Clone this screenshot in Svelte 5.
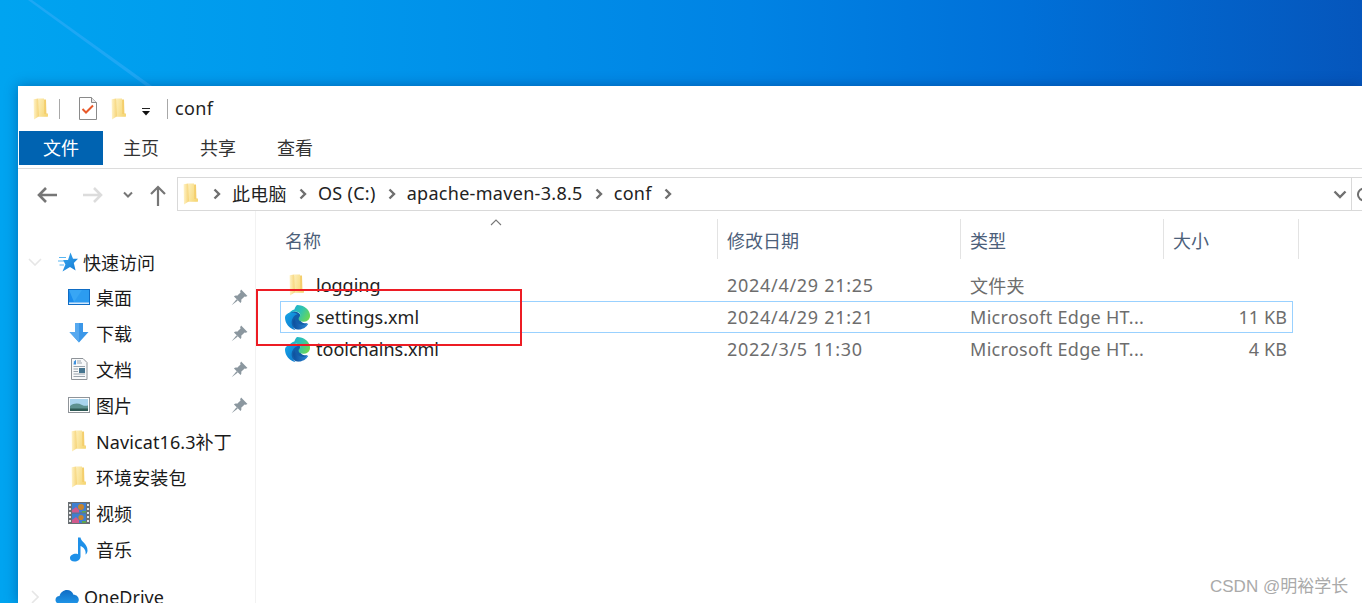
<script>
  const quick = [
    { label: '桌面', icon: 'desktop', pin: true },
    { label: '下载', icon: 'download', pin: true },
    { label: '文档', icon: 'docs', pin: true },
    { label: '图片', icon: 'pics', pin: true },
    { label: 'Navicat16.3补丁', icon: 'folder', pin: false },
    { label: '环境安装包', icon: 'folder', pin: false },
    { label: '视频', icon: 'video', pin: false },
    { label: '音乐', icon: 'music', pin: false }
  ];
  const files = [
    { name: 'logging', date: '2024/4/29 21:25', type: '文件夹', size: '', icon: 'folder' },
    { name: 'settings.xml', date: '2024/4/29 21:21', type: 'Microsoft Edge HT...', size: '11 KB', icon: 'edge', selected: true },
    { name: 'toolchains.xml', date: '2022/3/5 11:30', type: 'Microsoft Edge HT...', size: '4 KB', icon: 'edge' }
  ];
  const crumbs = ['此电脑', 'OS (C:)', 'apache-maven-3.8.5', 'conf'];
</script>

{#snippet folder()}
  <svg class="i-folder" viewBox="0 0 15 22">
    <path d="M4 1.5H13L13.4 15.5H14.8V18.5H4Z" fill="url(#fback)" />
    <path d="M0.6 1.2L5.2 0.6L6 18.2L1 21.4Z" fill="url(#ffront)" />
    <path d="M5.2 0.6H11V16H14.8V18.5H6Z" fill="url(#fmid)" />
  </svg>
{/snippet}

{#snippet edge()}
  <svg class="i-edge" viewBox="0 0 24 24">
    <path d="M3 10C5 5 11 5 14 8.5C16 11 15 14 15 15C17 18 20 17.5 21.5 17.5C19 21.5 15 23.5 11.5 23.5C6 22 2 16 3 10Z" fill="#125ea9" />
    <path d="M21.86 17.86q.14 0 .25.12.1.13.1.25t-.11.33l-.32.46-.43.53-.44.5q-.21.25-.38.42l-.22.23q-.58.53-1.34 1.04-.76.51-1.6.91-.86.4-1.74.64t-1.67.24q-.9 0-1.69-.28-.8-.28-1.48-.78-.68-.5-1.22-1.17-.53-.66-.92-1.44-.38-.77-.58-1.6-.2-.83-.2-1.67 0-1 .32-1.96.33-.97.87-1.8.14.95.55 1.77.41.82 1.02 1.5.6.68 1.38 1.21.78.54 1.64.9.86.36 1.77.56.92.2 1.8.2 1.12 0 2.18-.24 1.06-.23 2.06-.72l.2-.1.2-.05z" fill="url(#edgeA)" />
    <path d="M6.36 16.59q0 1.1.27 2.15.27 1.06.78 2.03.51.96 1.24 1.77.74.82 1.66 1.4-1.47-.2-2.8-.74-1.33-.55-2.48-1.37-1.15-.83-2.08-1.9-.92-1.07-1.58-2.33T.36 14.94Q0 13.54 0 12.06q0-.81.32-1.49.31-.68.83-1.23.53-.55 1.2-.96.66-.4 1.35-.66.74-.27 1.5-.39.78-.12 1.55-.12.7 0 1.42.1.72.12 1.4.35.68.23 1.32.57.63.35 1.16.83-.35 0-.7.07-.33.07-.65.23v-.02q-.63.28-1.2.74-.57.46-1.05 1.04-.48.58-.87 1.26-.38.67-.65 1.39-.27.71-.42 1.44-.15.72-.15 1.38z" fill="url(#edgeB)" />
    <path d="M11.96.06q1.7 0 3.33.39 1.63.38 3.07 1.15 1.43.77 2.62 1.93 1.18 1.16 1.98 2.7.49.94.76 1.96.28 1 .28 2.08 0 .89-.23 1.7-.24.8-.69 1.48-.45.68-1.1 1.22-.64.53-1.45.88-.54.24-1.11.36-.58.13-1.16.13-.42 0-.97-.03-.54-.03-1.1-.12-.55-.09-1.09-.28-.54-.19-1-.51-.45-.32-.73-.79-.28-.46-.28-1.1 0-.56.2-1.02.2-.45.55-.83.37-.38.6-.72.22-.34.22-.78 0-.83-.48-1.5-.48-.67-1.23-1.12-.76-.46-1.67-.7-.9-.25-1.75-.25-1.68 0-3.1.56-1.42.57-2.44 1.53-1.02.96-1.61 2.23-.58 1.27-.6 2.66 0-1.55.53-2.97.54-1.42 1.5-2.58.96-1.16 2.29-2.02 1.33-.85 2.9-1.3Q10.44.06 11.96.06z" fill="url(#edgeC)" />
  </svg>
{/snippet}

{#snippet navIcon(kind)}
  {#if kind === 'folder'}
    <span class="nav-folder">{@render folder()}</span>
  {:else if kind === 'desktop'}
    <svg class="i-box" viewBox="0 0 22 16">
      <rect x="0.5" y="0.5" width="21" height="15" fill="#1a8cec" stroke="#0f6cc4" />
      <path d="M1 1H21V13H6Z" fill="#38a6f4" />
      <path d="M14 1H21V13H6Z" fill="#2c9cf0" />
      <rect x="1" y="13.5" width="20" height="1.4" fill="#e8f4ff" />
    </svg>
  {:else if kind === 'download'}
    <svg class="i-box" viewBox="0 0 22 22">
      <path d="M7 1H15V10H20.5L11 20.5L1.5 10H7Z" fill="#3b97e8" />
      <path d="M7 1H11V20.5L1.5 10H7Z" fill="#57a9ef" />
    </svg>
  {:else if kind === 'docs'}
    <svg class="i-box" viewBox="0 0 22 22">
      <path d="M3.5 0.5H15L19 4.5V21.5H3.5Z" fill="#f8f9fa" stroke="#8e9398" />
      <path d="M6 3.5L8 1.8V6.5H5.5Z" fill="#3c8fdc" />
      <path d="M9 3H13M9 5H14M5.5 8.5H17M5.5 11H10M5.5 13.5H10M5.5 16H17M5.5 18.5H17" stroke="#9aa4ad" stroke-width="1" />
      <rect x="11" y="10" width="6" height="5" fill="#44748f" />
    </svg>
  {:else if kind === 'pics'}
    <svg class="i-box" viewBox="0 0 22 16">
      <rect x="0.5" y="0.5" width="21" height="15" fill="#fff" stroke="#8f9499" />
      <rect x="2" y="2" width="18" height="12" fill="#a9d4ee" />
      <path d="M2 9C6 6 10 6 14 8C16 9 18 9 20 8.5V14H2Z" fill="#5d9190" />
      <path d="M2 11.5H20V14H2Z" fill="#2f5a55" />
    </svg>
  {:else if kind === 'video'}
    <svg class="i-box" viewBox="0 0 22 22">
      <rect x="0" y="0" width="22" height="22" fill="#6a6f73" />
      <rect x="4" y="1" width="14" height="9.5" fill="#3f7fd0" />
      <rect x="4" y="11.5" width="14" height="9.5" fill="#3f7fd0" />
      <path d="M4 8L8 5L11 8V10.5H4Z" fill="#d05a8c" />
      <circle cx="13" cy="5" r="3" fill="#c8842c" />
      <path d="M4 18L8 15L11 18V21H4Z" fill="#d05a8c" />
      <circle cx="13" cy="15.5" r="2.6" fill="#c8842c" />
      <path d="M14 9H18V10.5H14ZM14 19H18V21H14Z" fill="#5ea64e" />
      <path d="M1 2H3V4H1ZM1 6H3V8H1ZM1 10H3V12H1ZM1 14H3V16H1ZM1 18H3V20H1ZM19 2H21V4H19ZM19 6H21V8H19ZM19 10H21V12H19ZM19 14H21V16H19ZM19 18H21V20H19Z" fill="#e4e6e8" />
    </svg>
  {:else if kind === 'music'}
    <svg class="i-music" viewBox="0 0 20 25">
      <path d="M9 0.5H11.5C12 5 18.5 6.5 18.5 13.5C18.5 15.5 17.5 17 16.5 17.5C17.5 13.5 14.5 10 11.5 9V19.5C11.5 22.5 8.5 24.5 5.5 24.5C2.5 24.5 1 23 1 21C1 18 5.5 16 9 17.2Z" fill="#1e90e8" />
    </svg>
  {/if}
{/snippet}

{#snippet pin()}
  <svg class="i-pin" viewBox="0 0 16 16">
    <path d="M9.5 0.5L15.5 6.5L13.8 7.4L12.8 7L9.6 10.2C10 11.4 9.8 12.4 9 13.2L2.8 7C3.6 6.2 4.6 6 5.8 6.4L9 3.2L8.6 2.2Z" fill="#8b979f" />
    <path d="M5.2 9.6L0.6 15.4L6.4 10.8Z" fill="#8b979f" />
  </svg>
{/snippet}

{#snippet chevron()}
  <svg class="i-crumb" viewBox="0 0 8 12"><path d="M1.5 1.5L6 6L1.5 10.5" fill="none" stroke="#6f6f6f" stroke-width="2.4" /></svg>
{/snippet}

<svg class="defs" aria-hidden="true">
  <defs>
    <linearGradient id="fback" x1="0" y1="0" x2="1" y2="0"><stop offset="0" stop-color="#fbe29a" /><stop offset="1" stop-color="#f2c95f" /></linearGradient>
    <linearGradient id="fmid" x1="0" y1="0" x2="1" y2="0.4"><stop offset="0" stop-color="#fdeeb8" /><stop offset="1" stop-color="#f6d878" /></linearGradient>
    <linearGradient id="ffront" x1="0" y1="0" x2="1" y2="0"><stop offset="0" stop-color="#fff3c8" /><stop offset="1" stop-color="#f5d273" /></linearGradient>
    <linearGradient id="edgeA" x1="0" y1="0" x2="1" y2="0"><stop offset="0" stop-color="#0d4f9c" /><stop offset="1" stop-color="#2a86d6" /></linearGradient>
    <linearGradient id="edgeB" x1="0" y1="0" x2="1" y2="1"><stop offset="0" stop-color="#15a3e8" /><stop offset="1" stop-color="#0d74c8" /></linearGradient>
    <linearGradient id="edgeC" x1="0" y1="0.3" x2="1" y2="0.7"><stop offset="0" stop-color="#16a6e0" /><stop offset="0.55" stop-color="#30c4b0" /><stop offset="1" stop-color="#6fd84f" /></linearGradient>
    <linearGradient id="star" x1="0" y1="0" x2="1" y2="1"><stop offset="0" stop-color="#36a8f0" /><stop offset="1" stop-color="#1479d2" /></linearGradient>
    <linearGradient id="cloud" x1="0" y1="0" x2="0" y2="1"><stop offset="0" stop-color="#0f6cc4" /><stop offset="1" stop-color="#1f96e8" /></linearGradient>
  </defs>
</svg>

<div class="desktop">
  <svg class="beam" viewBox="0 0 1362 86" preserveAspectRatio="none" aria-hidden="true">
    <path d="M32 0L152 86H146L28 0Z" fill="#27aaf5" opacity="0.75" />
  </svg>

  <div class="window">
    <header class="titlebar">
      <span class="t-folder">{@render folder()}</span>
      <span class="t-sep first"></span>
      <svg class="i-check" viewBox="0 0 18 23">
        <path d="M0.5 0.5H12.5L17.5 5.5V22.5H0.5Z" fill="#fff" stroke="#8a8a8a" />
        <path d="M12.5 0.5V5.5H17.5" fill="#e8e8e8" stroke="#8a8a8a" />
        <path d="M3.5 12L7 15.5L14 8.5" fill="none" stroke="#e8592a" stroke-width="2" />
      </svg>
      <span class="t-folder second">{@render folder()}</span>
      <svg class="i-drop" viewBox="0 0 10 10"><path d="M1 1.5H9" stroke="#222" /><path d="M1 4H9L5 8.5Z" fill="#111" /></svg>
      <span class="t-sep last"></span>
      <span class="t-title">conf</span>
    </header>

    <nav class="tabs">
      <span class="tab active">文件</span>
      <span class="tab">主页</span>
      <span class="tab">共享</span>
      <span class="tab">查看</span>
    </nav>

    <div class="navbar">
      <svg class="n-back" viewBox="0 0 22 18"><path d="M21 9H3M10 2L3 9L10 16" fill="none" stroke="#767676" stroke-width="2.6" /></svg>
      <svg class="n-fwd" viewBox="0 0 22 18"><path d="M1 9H19M12 2L19 9L12 16" fill="none" stroke="#dcdcdc" stroke-width="2.6" /></svg>
      <svg class="n-more" viewBox="0 0 10 8"><path d="M1 1.5L5 5.5L9 1.5" fill="none" stroke="#767676" stroke-width="2" /></svg>
      <svg class="n-up" viewBox="0 0 18 22"><path d="M9 22V3M2 10L9 3L16 10" fill="none" stroke="#767676" stroke-width="2.2" /></svg>
      <div class="address">
        <span class="a-folder">{@render folder()}</span>
        {#each crumbs as c}
          {@render chevron()}
          <span class="crumb">{c}</span>
        {/each}
        {@render chevron()}
        <span class="a-space"></span>
        <svg class="a-down" viewBox="0 0 14 9"><path d="M1.5 1.5L7 7L12.5 1.5" fill="none" stroke="#707070" stroke-width="2.4" /></svg>
        <span class="a-divider"></span>
        <svg class="a-refresh" viewBox="0 0 14 16"><path d="M11 4A6 6 0 1 0 13 9M12 0V5H7" fill="none" stroke="#707070" stroke-width="2" /></svg>
      </div>
    </div>

    <div class="body">
      <aside class="sidebar">
        <div class="side-row top">
          <svg class="s-chev" viewBox="0 0 14 8"><path d="M1 1L7 7L13 1" fill="none" stroke="#e6e6e6" stroke-width="1.6" /></svg>
          <svg class="i-star" viewBox="0 0 20 20">
            <path d="M12.5 0.5L15 6.8H20L15.8 11L17.6 18.5L12 15L4.5 19.5L7.4 12.4L5 8H10Z" fill="url(#star)" />
            <path d="M1 5.5H8M0 9H6M1.5 13H6" stroke="#58b6f2" stroke-width="1.2" />
          </svg>
          <span>快速访问</span>
        </div>
        {#each quick as item}
          <div class="side-row child">
            <span class="s-icon">{@render navIcon(item.icon)}</span>
            <span class="s-label">{item.label}</span>
            {#if item.pin}{@render pin()}{/if}
          </div>
        {/each}
        <div class="side-row top drive">
          <svg class="s-chev right" viewBox="0 0 8 14"><path d="M1 1L7 7L1 13" fill="none" stroke="#e6e6e6" stroke-width="1.6" /></svg>
          <svg class="i-cloud" viewBox="0 0 24 16">
            <path d="M5 15C2 15 0.5 13 0.5 10.8C0.5 8.5 2.3 7 4.5 7C5.5 3.5 8.5 1 12 1C15 1 17.5 3 18.5 5.8C21.5 5.8 23.8 8 23.8 10.8C23.8 13.2 22 15 19.5 15Z" fill="url(#cloud)" />
          </svg>
          <span>OneDrive</span>
        </div>
      </aside>

      <main class="list">
        <div class="head">
          <span class="col c-name">名称
            <svg class="sort" viewBox="0 0 12 7"><path d="M1 6L6 1L11 6" fill="none" stroke="#777" stroke-width="1.1" /></svg>
          </span>
          <span class="col c-date">修改日期</span>
          <span class="col c-type">类型</span>
          <span class="col c-size">大小</span>
        </div>
        <div class="rows">
          {#each files as f}
            <div class="row" class:selected={f.selected}>
              <span class="cell name">
                <span class="f-icon" class:dir={f.icon === 'folder'}>
                  {#if f.icon === 'edge'}{@render edge()}{:else}{@render folder()}{/if}
                </span>
                {f.name}
              </span>
              <span class="cell date">{f.date}</span>
              <span class="cell type">{f.type}</span>
              <span class="cell size">{f.size}</span>
            </div>
          {/each}
        </div>
      </main>
    </div>
  </div>

  <div class="redbox"></div>
  <div class="watermark">CSDN @明裕学长</div>
</div>

<style>
  :global(html), :global(body) { margin: 0; overflow: hidden; }
  .defs { position: absolute; width: 0; height: 0; }
  .desktop {
    position: relative;
    width: 1362px;
    height: 603px;
    box-sizing: border-box;
    padding: 86px 0 0 18px;
    overflow: hidden;
    background: linear-gradient(90deg, #00a4f0 0%, #0097ec 25%, #0083e4 55%, #0070d8 75%, #0556bc 100%);
    font-family: "Noto Sans", "Noto Sans CJK SC", sans-serif;
    font-size: 18px;
    color: #1a1a1a;
  }
  .beam { position: absolute; left: 0; top: 0; width: 1362px; height: 86px; }
  .window {
    position: relative;
    height: 517px;
    display: flex;
    flex-direction: column;
    background: #fff;
    box-shadow: 0 0 12px rgba(0, 30, 90, 0.4);
    overflow: hidden;
  }

  .titlebar { height: 45px; display: flex; align-items: center; flex: none; }
  .t-folder { display: flex; margin-left: 15px; }
  .t-folder.second { margin-left: 14px; }
  .i-folder { width: 15px; height: 22px; display: block; }
  .t-sep { width: 1px; height: 20px; background: #a8a8a8; margin-left: 11px; }
  .t-sep.last { margin-left: 16px; }
  .i-check { width: 18px; height: 23px; margin-left: 19px; }
  .i-drop { width: 10px; height: 10px; margin: 6px 0 0 15px; }
  .t-title { margin: -2px 0 0 7px; color: #222; letter-spacing: 0.4px; }

  .tabs {
    height: 38px;
    box-sizing: border-box;
    flex: none;
    display: flex;
    border-bottom: 1px solid #dcdcdc;
    padding-left: 1px;
    gap: 41px;
    align-items: flex-start;
    color: #333;
  }
  .tab { line-height: 35px; height: 34px; }
  .tab:nth-child(2) { margin-left: -21px; }
  .tab.active { width: 84px; text-align: center; background: #0063b1; color: #fff; line-height: 34px; }

  .navbar { height: 42px; flex: none; display: flex; align-items: flex-end; }
  .n-back, .n-fwd { width: 22px; height: 18px; margin-bottom: 7px; }
  .n-back { margin-left: 18px; }
  .n-fwd { margin-left: 24px; }
  .n-more { width: 10px; height: 8px; margin: 0 0 12px 19px; }
  .n-up { width: 18px; height: 22px; margin: 0 0 5px 16px; }
  .address {
    flex: 1;
    margin-left: 10px;
    height: 34px;
    box-sizing: border-box;
    border: 1px solid #d9d9d9;
    border-right: none;
    display: flex;
    align-items: center;
    min-width: 0;
    overflow: hidden;
  }
  .a-folder { display: flex; margin: 0 3px 0 5px; }
  .i-crumb { width: 8px; height: 12px; margin: 0 11px 0 12px; flex: none; }
  .crumb { letter-spacing: 0.3px; white-space: nowrap; color: #222; padding-bottom: 2px; }
  .a-space { flex: 1; }
  .a-down { width: 14px; height: 9px; }
  .a-divider { width: 1px; height: 100%; background: #d9d9d9; margin-left: 4px; }
  .a-refresh { width: 14px; height: 16px; margin-left: 5px; flex: none; margin-right: -9px; }

  .body { flex: 1; min-height: 0; display: flex; }
  .sidebar {
    width: 238px;
    box-sizing: border-box;
    flex: none;
    padding-top: 33px;
    border-right: 1px solid #f2f2f2;
  }
  .side-row { height: 36px; display: flex; align-items: center; white-space: nowrap; }
  .side-row.top { padding-left: 10px; }
  .side-row.top + .child { margin-top: -1px; }
  .s-chev { width: 14px; height: 8px; flex: none; }
  .s-chev.right { width: 8px; height: 14px; margin-left: 3px; margin-right: 3px; }
  .i-star { width: 20px; height: 20px; margin: 0 5px 0 16px; flex: none; }
  .i-cloud { width: 24px; height: 16px; margin: 0 5px 0 13px; flex: none; }
  .drive { margin-top: 12px; }
  .child { padding-left: 49px; }
  .s-icon { width: 29px; display: flex; flex: none; }
  .i-box { width: 22px; height: 22px; display: block; margin-left: 1px; }
  .i-music { width: 20px; height: 25px; display: block; margin: -2px 0 -2px 2px; }
  .nav-folder { display: flex; margin-left: 4px; }
  .s-label { flex: 1; letter-spacing: 0.1px; }
  .i-pin { width: 17px; height: 17px; margin-right: 7px; flex: none; }

  .list { flex: 1; min-width: 0; }
  .head { height: 49px; padding-top: 8px; box-sizing: border-box; display: flex; color: #4c607a; }
  .col { height: 40px; line-height: 44px; box-sizing: border-box; padding-left: 9px; border-right: 1px solid #e3e3e3; position: relative; flex: none; }
  .c-name { width: 462px; padding-left: 29px; }
  .c-date { width: 243px; }
  .c-type { width: 203px; }
  .c-size { width: 135px; }
  .sort { position: absolute; left: 234px; top: 0; width: 12px; height: 7px; }
  .rows { padding: 9px 0 0 24px; }
  .row {
    width: 1013px;
    height: 32px;
    box-sizing: border-box;
    display: flex;
    align-items: center;
    border: 1px solid transparent;
  }
  .row.selected { border-color: #99d1ff; }
  .cell { white-space: nowrap; flex: none; }
  .name { width: 446px; display: flex; align-items: center; color: #222; }
  .f-icon { width: 35px; display: flex; flex: none; padding-left: 4px; box-sizing: border-box; }
  .f-icon.dir { padding-left: 8px; }
  .i-edge { width: 25px; height: 25px; display: block; }
  .date { width: 243px; color: #6d6d6d; letter-spacing: 0.7px; }
  .type { width: 201px; color: #6d6d6d; letter-spacing: 0.3px; overflow: hidden; }
  .size { width: 116px; text-align: right; color: #6d6d6d; letter-spacing: 0.1px; }

  .redbox {
    position: absolute;
    left: 256px;
    top: 289px;
    width: 266px;
    height: 57px;
    box-sizing: border-box;
    border: 2px solid #ed1c24;
  }
  .watermark {
    position: absolute;
    left: 1210px;
    top: 572px;
    font-size: 17px;
    color: #aaa;
    font-family: "Liberation Sans", "Noto Sans CJK SC", sans-serif;
  }
</style>
